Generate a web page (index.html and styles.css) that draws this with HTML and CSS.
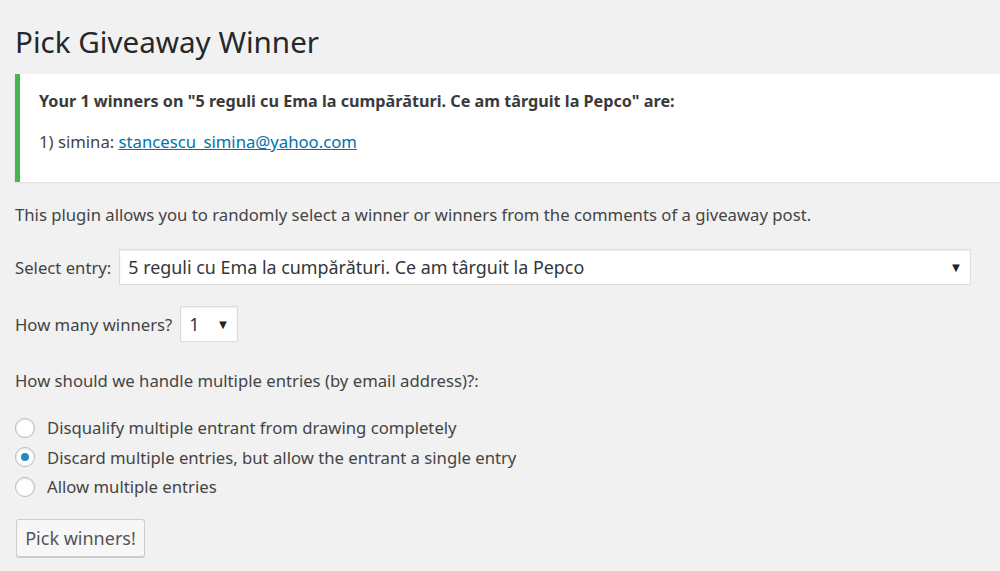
FILE: index.html
```html
<!DOCTYPE html>
<html lang="ro">
<head>
<meta charset="utf-8">
<title>Pick Giveaway Winner</title>
<link rel="stylesheet" href="styles.css">
</head>
<body>
<div class="wrap">
  <h1 class="title">Pick Giveaway Winner</h1>
  <div class="notice">
    <p class="notice-head">Your 1 winners on "5 reguli cu Ema la cumpărături. Ce am târguit la Pepco" are:</p>
    <p class="notice-line">1) simina: <a href="#">stancescu_simina@yahoo.com</a></p>
  </div>
  <p class="intro">This plugin allows you to randomly select a winner or winners from the comments of a giveaway post.</p>
  <div class="field">
    <span class="label">Select entry:</span>
    <div class="select select-wide"><span>5 reguli cu Ema la cumpărături. Ce am târguit la Pepco</span><span class="arrow">▼</span></div>
  </div>
  <div class="field field-count">
    <span class="label">How many winners?</span>
    <div class="select select-small"><span>1</span><span class="arrow">▼</span></div>
  </div>
  <p class="question">How should we handle multiple entries (by email address)?:</p>
  <div class="radios">
    <div class="radio-row"><span class="radio"></span><span>Disqualify multiple entrant from drawing completely</span></div>
    <div class="radio-row"><span class="radio checked"></span><span>Discard multiple entries, but allow the entrant a single entry</span></div>
    <div class="radio-row"><span class="radio"></span><span>Allow multiple entries</span></div>
  </div>
  <button class="button">Pick winners!</button>
</div>
</body>
</html>
```
FILE: styles.css
```css
html, body {
  margin: 0;
  padding: 0;
  background: #f1f1f1;
}
body {
  font-family: "Noto Sans", "Open Sans", sans-serif;
  font-size: 16.7px;
  color: #444;
  overflow: hidden;
  width: 1000px;
  height: 571px;
}
.wrap {
  padding: 0 0 0 15px;
}
.title {
  margin: 0;
  box-sizing: border-box;
  font-weight: 400;
  font-size: 29.6px;
  color: #23282d;
  height: 74px;
  line-height: 40px;
  padding-top: 22px;
}
.notice {
  background: #fff;
  border-left: 5px solid #46b450;
  box-shadow: 0 1px 2px rgba(0,0,0,0.08);
  height: 108px;
  box-sizing: border-box;
  padding: 16px 0 0 19px;
  margin-right: -20px;
}
.notice p {
  margin: 0;
  line-height: 22px;
}
.notice-head {
  font-weight: 700;
  font-size: 16.2px;
  color: #3a3a3a;
}
.notice-line {
  margin-top: 19px !important;
}
.notice a {
  color: #0073aa;
  text-decoration: underline;
}
.intro {
  margin: 22px 0 0;
  line-height: 22px;
}
.field {
  display: flex;
  align-items: center;
  gap: 8px;
  margin-top: 23px;
  height: 36px;
}
.field-count {
  margin-top: 21px;
}
.select {
  height: 36px;
  box-sizing: border-box;
  background: #fff;
  border: 1px solid #ddd;
  box-shadow: inset 0 1px 2px rgba(0,0,0,0.07);
  display: flex;
  align-items: center;
  justify-content: space-between;
  color: #32373c;
  font-size: 17.9px;
  padding: 0 8px 0 8px;
}
.select-wide {
  width: 852px;
}
.select-small {
  width: 58px;
}
.arrow {
  font-size: 13px;
  color: #222;
}
.question {
  margin: 28px 0 0;
  line-height: 22px;
}
.radios {
  margin-top: 21px;
  display: flex;
  flex-direction: column;
}
.radio-row {
  display: flex;
  align-items: center;
  gap: 12px;
  height: 29.5px;
}
.radio {
  width: 20px;
  height: 20px;
  box-sizing: border-box;
  border-radius: 50%;
  border: 1px solid #b4b9be;
  background: #fff;
  box-shadow: inset 0 1px 2px rgba(0,0,0,0.1);
  display: flex;
  align-items: center;
  justify-content: center;
}
.radio.checked::after {
  content: "";
  width: 8px;
  height: 8px;
  border-radius: 50%;
  background: #1e8cbe;
}
.button {
  margin-top: 17px;
  margin-left: 1px;
  height: 38px;
  width: 129px;
  font-family: inherit;
  font-size: 18px;
  color: #555;
  background: #f7f7f7;
  border: 1px solid #ccc;
  border-radius: 3px;
  box-shadow: 0 1px 0 #ccc;
  padding: 0;
}
```
